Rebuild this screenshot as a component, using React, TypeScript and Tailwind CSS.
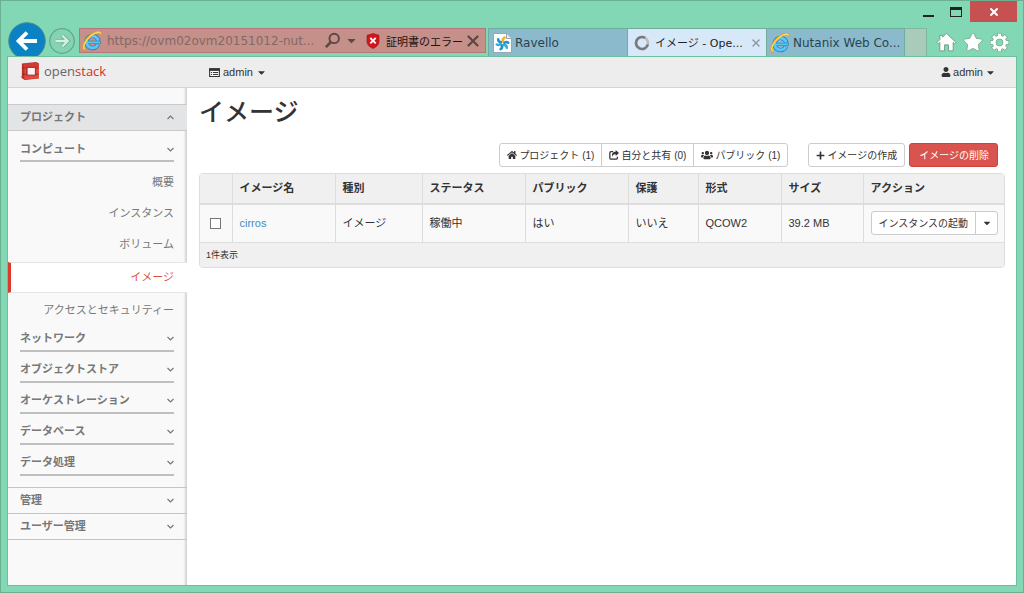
import { X } from "lucide-react";
import { FaCaretDown, FaHome, FaPlus, FaStar, FaUser, FaUsers } from "react-icons/fa";

const COMPUTE_ITEMS = ["概要", "インスタンス", "ボリューム", "イメージ", "アクセスとセキュリティー"];
const PROJECT_GROUPS = ["ネットワーク", "オブジェクトストア", "オーケストレーション", "データベース", "データ処理"];
const PANELS = ["管理", "ユーザー管理"];

const COLUMNS = [
  { label: "イメージ名", width: 103 },
  { label: "種別", width: 87 },
  { label: "ステータス", width: 103 },
  { label: "パブリック", width: 103 },
  { label: "保護", width: 70 },
  { label: "形式", width: 83 },
  { label: "サイズ", width: 82 },
  { label: "アクション", width: 142 },
];

const IMAGES = [
  { name: "cirros", cells: ["イメージ", "稼働中", "はい", "いいえ", "QCOW2", "39.2 MB"] },
];

function IeLogo() {
  return (
    <svg viewBox="0 0 20 20" className="size-5 shrink-0" fill="none" aria-hidden="true">
      <circle cx="10.5" cy="11" r="6" stroke="#1b7cc4" strokeWidth="4.4" strokeDasharray="33.2 4.5" transform="rotate(24 10.5 11)" />
      <path d="M6 11.400h12.600" stroke="#1b7cc4" strokeWidth="3.2" />
      <circle cx="10.5" cy="11" r="6" stroke="#5cc6f5" strokeWidth="3" strokeDasharray="32.600 5.100" transform="rotate(26 10.5 11)" />
      <path d="M6 11.400h12" stroke="#5cc6f5" strokeWidth="2" />
      <path d="M3.2 18.8C-.8 17.4 2.6 9.6 8 5C12.6 1.2 18.6-.8 19 3.4" stroke="#dca022" strokeWidth="2.4" />
      <path d="M3 18.4C-.2 16.6 3.2 9.6 8.2 5.2C12.6 1.6 18-.2 18.6 2.8" stroke="#fcd95c" strokeWidth="1.4" />
    </svg>
  );
}

function OpenstackLogo() {
  return (
    <svg viewBox="0 0 21 20" className="h-5 w-5 shrink-0" aria-hidden="true">
      <path d="M.5 16L4 14.500v4z" fill="#8c8c8c" />
      <path d="M2 2L17 .6l2.600 1.200v16L5 19.400 2 17.600z" fill="#b8332b" />
      <path d="M4.500 2.400L19.600 1.800v16L4.500 19z" fill="#e2493f" />
      <path d="M4.500 2.400L19.600 1.800v4.400H4.500z" fill="#d03a31" />
      <path d="M2 7h5.500M16 7h3.600M2 13.400h5.500M16 13.400h3.600" stroke="#8f2620" strokeWidth=".8" />
      <path d="M6.600 5.800h10v9h-10z" fill="#a82e27" />
      <path d="M8 6.800h7.600v7H8z" fill="#fff3f3" />
    </svg>
  );
}

function RavelloIcon() {
  return (
    <svg viewBox="0 0 19 20" className="h-5 w-[19px] shrink-0" aria-hidden="true">
      <path d="M.5.5h13l5 5v14H.5z" fill="#fff" stroke="#9aa6ad" />
      <path d="M13.500.5v5h5" fill="#e8ecef" stroke="#9aa6ad" />
      <g fill="none" strokeWidth="2.600" strokeLinecap="round">
        <path d="M10 8.500c-.6-1.800 0-3 1.600-3.900" stroke="#f2b233" />
        <path d="M11.500 10c1.200-1.200 2.600-1.200 3.700-.3" stroke="#1f93cc" />
        <path d="M11 12c1.700 0 2.700 1 2.800 2.800" stroke="#37abd8" />
        <path d="M8.800 12.200c.7 1.700.2 3-1.200 3.900" stroke="#1f93cc" />
        <path d="M7.600 11c-1.200 1.200-2.500 1.300-3.800.5" stroke="#37abd8" />
        <path d="M7.800 9c-1.700 0-2.600-1-2.600-2.600" stroke="#1f93cc" />
      </g>
    </svg>
  );
}

function Gear() {
  const teeth = [0, 45, 90, 135, 180, 225, 270, 315];
  const ring = (color: string, grow: number) => (
    <g stroke={color} fill="none">
      <circle cx="11" cy="11" r="5.500" strokeWidth={3.2 + grow} />
      {teeth.map((a) => (
        <path key={a} d={grow ? "M11 5V1" : "M11 5V1.600"} strokeWidth={3.4 + grow} transform={`rotate(${a} 11 11)`} />
      ))}
    </g>
  );
  return (
    <svg viewBox="0 0 22 22" className="size-[21px]" aria-hidden="true">
      {ring("#6a9c87", 1.2)}
      {ring("#fff", 0)}
    </svg>
  );
}

function Chevron({ up = false }: { up?: boolean }) {
  return (
    <svg viewBox="0 0 7 5" className="h-[5px] w-[7px]" fill="none" stroke="#777" strokeWidth="1.2" aria-hidden="true">
      <path d={up ? "M.5 4l3-3 3 3" : "M.5 1l3 3 3-3"} />
    </svg>
  );
}

function ListAltIcon() {
  return (
    <svg viewBox="0 0 12 10" className="h-[9px] w-[11px]" aria-hidden="true">
      <path d="M.6 1h10.800v8.400H.6z" fill="#fff" stroke="#333" strokeWidth="1.200" />
      <path d="M0 .4h12v2.800H0z" fill="#333" />
      <path d="M2 5h1.200M4.200 5H10M2 7.200h1.200M4.200 7.200H10" stroke="#333" strokeWidth="1.100" />
    </svg>
  );
}

function ShareIcon() {
  return (
    <svg viewBox="0 0 12 12" className="size-[10px]" aria-hidden="true">
      <path d="M5 2H2.500Q1 2 1 3.500v6Q1 11 2.500 11h6Q10 11 10 9.500V8" fill="none" stroke="#333" strokeWidth="1.500" />
      <path d="M8 0l4 3.600-4 3.600V5C5.800 5 4.600 5.600 4 8 2.800 4.600 4.600 2.300 8 2.200z" fill="#333" />
    </svg>
  );
}

function TitleBar() {
  return (
    <div className="flex h-[21px] items-start justify-end text-[#2b2b2b]">
      <button aria-label="最小化" className="flex h-[21px] w-[28px] items-center justify-center pt-2">
        <span className="h-[2px] w-[11px] bg-[#222]" />
      </button>
      <button aria-label="最大化" className="flex h-[21px] w-[28px] items-center justify-center">
        <span className="h-[10px] w-[12px] border border-t-3 border-[#222]" />
      </button>
      <button aria-label="閉じる" className="flex h-[21px] w-[47px] items-center justify-center bg-[#c75050]">
        <X size={12} strokeWidth={4} color="#fff" />
      </button>
    </div>
  );
}

function BrowserBar() {
  return (
    <div className="flex h-[34px] items-end pl-px">
      <button aria-label="戻る" className="h-[34px] w-[38px] shrink-0 overflow-hidden">
        <svg viewBox="0 0 38 34" className="block h-[34px] w-[38px]">
          <circle cx="19" cy="19" r="18.300" fill="#0a82c4" stroke="#4b8f8c" strokeWidth="1" />
          <path d="M29 19H11M19 10.500L10.500 19l8.500 8.500" fill="none" stroke="#fff" strokeWidth="3.800" />
        </svg>
      </button>
      <button aria-label="進む" className="ml-[3px] h-[34px] w-[27px] shrink-0">
        <svg viewBox="0 0 27 34" className="block h-[34px] w-[27px]">
          <circle cx="13" cy="19" r="12.300" fill="#84d3b2" stroke="#63a58a" strokeWidth="1.200" />
          <path d="M6.500 19H18M13.500 13.800l5.200 5.200-5.200 5.200" fill="none" stroke="#6eae93" strokeWidth="4" />
          <path d="M6.500 19H18M13.500 13.800l5.200 5.200-5.200 5.200" fill="none" stroke="#d3f0e3" strokeWidth="2.300" />
        </svg>
      </button>

      <form className="mb-[3px] ml-[3px] flex h-[25px] w-[407px] shrink-0 items-center border border-[#b9767a] bg-[#c49089] pl-[2px]">
        <IeLogo />
        <input
          type="text"
          aria-label="アドレス"
          readOnly
          value="https://ovm02ovm20151012-nut..."
          className="ml-[5px] w-[212px] shrink-0 bg-transparent font-[DejaVu_Sans,sans-serif] text-xs text-[#836965] outline-none"
        />
        <button type="button" aria-label="検索" className="ml-[5px]">
          <svg viewBox="0 0 18 18" className="size-[17px]" fill="none" stroke="#5c4844">
            <circle cx="10.800" cy="6.800" r="5" strokeWidth="2" />
            <path d="M7.200 10.600L2 16" strokeWidth="2.800" />
          </svg>
        </button>
        <button type="button" aria-label="履歴" className="ml-1 text-[#5c4844]">
          <FaCaretDown size={13} />
        </button>
        <button type="button" className="ml-2 flex items-center gap-[6px] text-[11px] whitespace-nowrap text-[#1c1212]">
          <svg viewBox="0 0 14 16" className="h-4 w-[14px]" aria-hidden="true">
            <path d="M7 .5l6 1.800v6c0 3.500-2.500 5.700-6 7.200-3.500-1.500-6-3.700-6-7.200v-6z" fill="#d6141c" stroke="#a50d14" strokeWidth=".6" />
            <path d="M4.300 5l5.400 5.400M9.700 5l-5.400 5.400" stroke="#fff" strokeWidth="1.800" />
          </svg>
          <span className="pt-[2px] leading-4">証明書のエラー</span>
        </button>
        <button type="button" aria-label="中止" className="ml-px text-[#5c4844]">
          <X size={18} strokeWidth={3} />
        </button>
      </form>

      <div className="ml-[2px] flex h-[28px] min-w-0 flex-1 font-[DejaVu_Sans,Noto_Sans_CJK_JP,sans-serif] text-xs whitespace-nowrap text-[#2c4450]">
        <button className="flex w-[140px] items-center gap-[3px] border border-b-0 border-[#6fae9c] bg-[#8bbacd] pl-1">
          <RavelloIcon />
          Ravello
        </button>
        <div className="flex w-[138px] items-center border-t border-[#6fae9c] bg-[#d7e9f9] pl-[6px] text-[11px] text-[#222]">
          <svg viewBox="0 0 16 16" className="mr-[5px] size-4 shrink-0" fill="none" strokeWidth="2.600">
            <circle cx="8" cy="8" r="6" stroke="#b9bcc0" />
            <path d="M11 2.800A6 6 0 1 0 13.800 9.500" stroke="#777b80" />
          </svg>
          <span className="pt-[2px] leading-4">イメージ - Ope...</span>
          <button aria-label="タブを閉じる" className="mr-1 ml-auto text-[#8e99a3]">
            <X size={12} strokeWidth={3} />
          </button>
        </div>
        <button className="flex w-[139px] items-center gap-[3px] border border-b-0 border-[#6fae9c] bg-[#8bbacd] pl-[3px]">
          <IeLogo />
          Nutanix Web Co...
        </button>
        <button aria-label="新しいタブ" className="w-[22px] border border-b-0 border-l-0 border-[#7fb7a0] bg-[#a9cbba]" />
      </div>

      <div className="mr-[7px] flex h-[28px] shrink-0 items-center gap-[6px] text-white">
        <button aria-label="ホーム">
          <svg viewBox="0 0 22 20" className="h-[20px] w-[21px]" fill="#fff" stroke="#6a9c87" strokeWidth="1">
            <path d="M11 .8L21 10.500l-1.400 1.400-1.600-1.500V19.300h-5v-6.300H9v6.300H4v-8.900l-1.600 1.500L1 10.500l3-3V3h3v1.700z" />
          </svg>
        </button>
        <button aria-label="お気に入り">
          <FaStar size={20} stroke="#6a9c87" strokeWidth={22} />
        </button>
        <button aria-label="ツール">
          <Gear />
        </button>
      </div>
    </div>
  );
}

function Sidebar() {
  return (
    <nav className="w-[179px] shrink-0 bg-[#f9f9f9] pt-4 text-[11px] text-[#777] shadow-[inset_-3px_0_2px_-1px_#d4d4d4]">
      <button className="flex h-[27px] w-full items-center justify-between border-y border-[#c9cacb] bg-[#e3e4e6] pr-[13px] pl-3 font-bold">
        プロジェクト
        <Chevron up />
      </button>

      <div className="pt-[5px] pr-[13px] pl-3">
        <button className="flex h-[26px] w-full items-center justify-between border-b-2 border-[#bfbfbf] pt-[2px] font-bold">
          コンピュート
          <Chevron />
        </button>
      </div>

      <ul className="pt-[5px] text-right">
        {COMPUTE_ITEMS.map((item) => (
          <li key={item}>
            {item === "イメージ" ? (
              <a
                href="#"
                className="my-[2px] block h-[31px] border-y border-l-3 border-y-[#e5e5e5] border-l-[#dd3a2c] bg-white pr-[13px] leading-[29px] text-[#e0503f]"
              >
                {item}
              </a>
            ) : (
              <a href="#" className="block h-[31px] pr-[13px] leading-[31px]">
                {item}
              </a>
            )}
          </li>
        ))}
      </ul>

      <div className="flex flex-col gap-[5px] pr-[13px] pb-[11px] pl-3">
        {PROJECT_GROUPS.map((group) => (
          <button key={group} className="flex h-[26px] w-full items-center justify-between border-b-2 border-[#bfbfbf] font-bold">
            {group}
            <Chevron />
          </button>
        ))}
      </div>

      <div className="border-t border-[#c4c4c4]">
        {PANELS.map((panel) => (
          <button key={panel} className="flex h-[26px] w-full items-center justify-between border-b border-[#c4c4c4] pr-[13px] pl-3 font-bold">
            {panel}
            <Chevron />
          </button>
        ))}
      </div>
    </nav>
  );
}

function Toolbar() {
  return (
    <div className="flex h-6 justify-end pr-[7px] text-[10px] whitespace-nowrap">
      <div className="flex divide-x divide-[#ccc] rounded-[3px] border border-[#ccc] bg-white">
        <button className="flex items-center gap-[2px] px-[7px]">
          <FaHome size={10} />
          プロジェクト (1)
        </button>
        <button className="flex items-center gap-[2px] px-[7px]">
          <ShareIcon />
          自分と共有 (0)
        </button>
        <button className="flex items-center gap-[2px] px-[7px]">
          <FaUsers size={12} />
          パブリック (1)
        </button>
      </div>
      <button className="ml-5 flex items-center gap-[2px] rounded-[3px] border border-[#ccc] bg-white px-[7px]">
        <FaPlus size={9} />
        イメージの作成
      </button>
      <button className="ml-1 rounded-[3px] border border-[#d43f3a] bg-[#d9534f] pr-2 pl-[9px] text-white">
        イメージの削除
      </button>
    </div>
  );
}

function ImagesTable() {
  return (
    <div className="mt-[6px] overflow-hidden rounded-[4px] border border-[#ddd]">
      <table className="w-full table-fixed border-collapse text-left text-[11px]">
        <colgroup>
          <col style={{ width: 32 }} />
          {COLUMNS.map((c) => (
            <col key={c.label} style={{ width: c.width }} />
          ))}
        </colgroup>
        <thead className="bg-[#f0f0f0]">
          <tr className="h-[30px] border-b-2 border-[#ddd]">
            <th />
            {COLUMNS.map((c) => (
              <th key={c.label} className="border-l border-[#ddd] px-[7px] pb-px leading-4 font-bold">
                {c.label}
              </th>
            ))}
          </tr>
        </thead>
        <tbody className="bg-[#f9f9f9]">
          {IMAGES.map((image) => (
            <tr key={image.name} className="h-[38px] border-b border-[#ddd]">
              <td className="pl-[10px]">
                <input
                  type="checkbox"
                  aria-label={image.name}
                  className="block size-[11px] appearance-none border border-[#777] bg-white"
                />
              </td>
              <td className="border-l border-[#ddd] px-[7px]">
                <a href="#" className="text-[#428bca]">
                  {image.name}
                </a>
              </td>
              {image.cells.map((cell) => (
                <td key={cell} className="border-l border-[#ddd] px-[7px]">
                  {cell}
                </td>
              ))}
              <td className="border-l border-[#ddd] px-[7px]">
                <div className="flex h-6 divide-x divide-[#ccc] rounded-[3px] border border-[#ccc] bg-white text-[10px] whitespace-nowrap">
                  <button className="flex-1">インスタンスの起動</button>
                  <button aria-label="その他のアクション" className="flex w-[21px] items-center justify-center">
                    <FaCaretDown size={10} />
                  </button>
                </div>
              </td>
            </tr>
          ))}
        </tbody>
        <tfoot className="bg-[#f0f0f0]">
          <tr className="h-[25px]">
            <td colSpan={9} className="px-[6px] text-[9px] leading-4">
              1件表示
            </td>
          </tr>
        </tfoot>
      </table>
    </div>
  );
}

export default function App() {
  return (
    <div className="flex min-h-screen flex-col border border-[#6bb090] bg-[#82d8b4] px-[6px] pb-[6px] font-[Liberation_Sans,Noto_Sans_CJK_JP,sans-serif] text-[#333]">
      <TitleBar />
      <BrowserBar />

      <div className="flex flex-1 flex-col border border-[#6cc09d] bg-white">
        <header className="flex h-[31px] shrink-0 items-center border-b border-[#d4d4d4] bg-[#ededed] pr-5 pl-3 text-[11px]">
          <a href="#" className="flex w-[189px] items-center gap-1 pb-[2px]">
            <OpenstackLogo />
            <span className="font-[Open_Sans,sans-serif] text-[13px] leading-5 text-[#666]">
              open<span className="text-[#d0312b]">stack</span>
            </span>
          </a>
          <button className="flex items-center gap-[3px]">
            <ListAltIcon />
            admin
            <FaCaretDown size={11} />
          </button>
          <button className="ml-auto flex items-center gap-[2px]">
            <FaUser size={10} />
            admin
            <FaCaretDown size={11} />
          </button>
        </header>

        <div className="flex flex-1">
          <Sidebar />
          <main className="min-w-0 flex-1 pr-[11px] pl-3">
            <h1 className="pt-1 pb-[11px] text-[25px] leading-10 font-medium">イメージ</h1>
            <Toolbar />
            <ImagesTable />
          </main>
        </div>
      </div>
    </div>
  );
}
